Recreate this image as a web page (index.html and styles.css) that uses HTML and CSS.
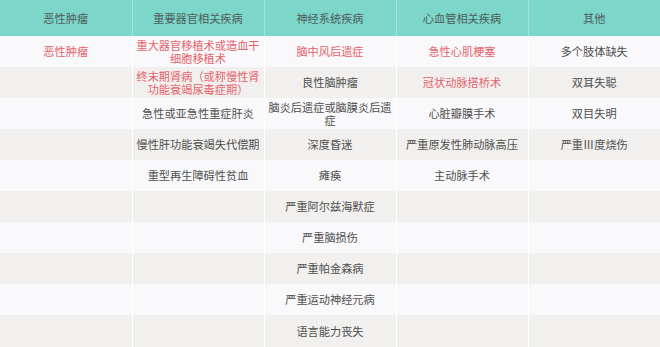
FILE: index.html
```html
<!DOCTYPE html>
<html lang="zh">
<head>
<meta charset="utf-8">
<link rel="stylesheet" href="styles.css">
</head>
<body>
<table class="grid">
  <thead>
    <tr><th>恶性肿瘤</th><th>重要器官相关疾病</th><th>神经系统疾病</th><th>心血管相关疾病</th><th>其他</th></tr>
  </thead>
  <tbody>
    <tr><td class="red">恶性肿瘤</td><td class="red">重大器官移植术或造血干细胞移植术</td><td class="red">脑中风后遗症</td><td class="red">急性心肌梗塞</td><td>多个肢体缺失</td></tr>
    <tr><td></td><td class="red">终末期肾病（或称慢性肾功能衰竭尿毒症期）</td><td>良性脑肿瘤</td><td class="red">冠状动脉搭桥术</td><td>双耳失聪</td></tr>
    <tr><td></td><td>急性或亚急性重症肝炎</td><td>脑炎后遗症或脑膜炎后遗症</td><td>心脏瓣膜手术</td><td>双目失明</td></tr>
    <tr><td></td><td>慢性肝功能衰竭失代偿期</td><td>深度昏迷</td><td>严重原发性肺动脉高压</td><td>严重Ⅲ度烧伤</td></tr>
    <tr><td></td><td>重型再生障碍性贫血</td><td>瘫痪</td><td>主动脉手术</td><td></td></tr>
    <tr><td></td><td></td><td>严重阿尔兹海默症</td><td></td><td></td></tr>
    <tr><td></td><td></td><td>严重脑损伤</td><td></td><td></td></tr>
    <tr><td></td><td></td><td>严重帕金森病</td><td></td><td></td></tr>
    <tr><td></td><td></td><td>严重运动神经元病</td><td></td><td></td></tr>
    <tr class="last"><td></td><td></td><td>语言能力丧失</td><td></td><td></td></tr>
  </tbody>
</table>
</body>
</html>
```
FILE: styles.css
```css
html, body {
  margin: 0;
  padding: 0;
  background: #f9f8fa;
}
.grid {
  width: 660px;
  border-collapse: collapse;
  table-layout: fixed;
  font-family: "Noto Sans CJK SC", "Noto Sans", sans-serif;
  font-size: 11.2px;
  line-height: 12.5px;
  color: #4f4f4f;
}
.grid th, .grid td {
  width: 132px;
  padding: 0 2px;
  text-align: center;
  vertical-align: middle;
  box-sizing: border-box;
}
.grid th {
  height: 36px;
  background: #7dd6ca;
  color: #4e5c5a;
  font-weight: normal;
  border-left: 1px solid #a6e3da;
}
.grid th:first-child, .grid td:first-child {
  border-left: none;
}
.grid td {
  height: 31px;
  border-left: 1px solid #ffffff;
}
.grid tbody tr:nth-child(odd) td {
  background: #f9f8fa;
}
.grid tbody tr:nth-child(even) td {
  background: #f1f0ee;
}
.grid tbody tr.last td {
  height: 32px;
}
.grid td.red {
  color: #e6626b;
}
```
